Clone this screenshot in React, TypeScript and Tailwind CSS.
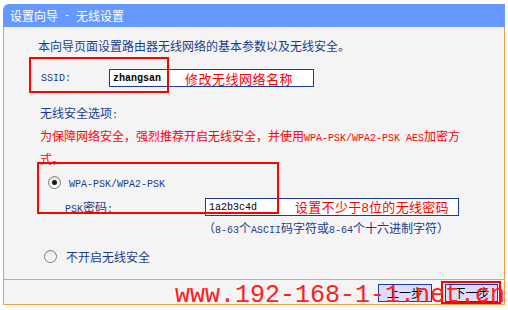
import React from "react";

const cjk = "font-['Noto_Sans_CJK_SC',sans-serif]";
const mono = "font-['Liberation_Mono',monospace] text-[10px]";

function Radio({ checked }: { checked?: boolean }) {
  return (
    <div className="w-[13px] h-[13px] rounded-full border border-[#7a7a7a] bg-gradient-to-b from-[#e6e6e6] to-white flex items-center justify-center shrink-0">
      {checked && <div className="w-[5px] h-[5px] rounded-full bg-[#1a1a1a]" />}
    </div>
  );
}

export default function App() {
  return (
    <div className={`w-[508px] h-[310px] bg-white pt-[4px] pl-[3px] ${cjk} text-[12px]`}>
      <div className="w-[502px]">
        <div className="h-[23px] bg-[#6699ff] rounded-tl-[6px] flex items-center pl-[7px] text-white text-[12px] leading-none">
          <span>设置向导</span>
          <span className="font-['Liberation_Mono',monospace] text-[10px] whitespace-pre"> - </span>
          <span>无线设置</span>
        </div>
        <div className="relative border-x border-b border-[#f7a040] bg-[#f4f4f4] text-[#1b3c8e]">
          <div className="h-[252px] pt-[11px] pl-[34px]">
            <div className="leading-[16px]">本向导页面设置路由器无线网络的基本参数以及无线安全。</div>
            <div className="mt-[15px] flex items-center h-[18px]">
              <span className={`${mono} w-[71px] shrink-0 pl-[3px] text-[#1b3c8e]`}>SSID:</span>
              <div className="w-[205px] h-[18px] border border-[#1a3ca0] bg-white flex items-center">
                <span className="font-['Liberation_Mono',monospace] text-[10px] font-bold text-black w-[75px] pl-[3px]">zhangsan</span>
                <span className="text-[#ff0000] text-[13px] leading-none tracking-[0.5px]">修改无线网络名称</span>
              </div>
            </div>
            <div className="mt-[16px] leading-[20px] pl-[2px]">
              <div>
                无线安全选项<span className={mono}>:</span>
              </div>
              <div className="text-[#ff0000]">
                为保障网络安全，强烈推荐开启无线安全，并使用
                <span className={mono}>WPA-PSK/WPA2-PSK AES</span>加密方
                <br />
                式。
              </div>
            </div>
            <div className="mt-[6px] flex items-center h-[14px] pl-[10px]">
              <Radio checked />
              <span className={`${mono} ml-[8px] mt-[4px]`}>WPA-PSK/WPA2-PSK</span>
            </div>
            <div className="mt-[9px] flex items-center h-[18px]">
              <span className="w-[167px] shrink-0 pl-[27px]">
                <span className={mono}>PSK</span>密码<span className={mono}>:</span>
              </span>
              <div className="w-[254px] h-[18px] border border-[#1a3ca0] bg-white flex items-center">
                <span className="font-['Liberation_Mono',monospace] text-[10px] text-black w-[89px] pl-[3px]">1a2b3c4d</span>
                <span className="text-[#ff0000] text-[13px] leading-none tracking-[0.3px]">
                  设置不少于<span className="font-['Liberation_Sans',sans-serif]">8</span>位的无线密码
                </span>
              </div>
            </div>
            <div className="mt-[4px] leading-[16px] pl-[165px]">
              （<span className={mono}>8-63</span>个<span className={mono}>ASCII</span>码字符或<span className={mono}>8-64</span>个十六进制字符）
            </div>
            <div className="mt-[10px] flex items-center h-[14px] pl-[6px]">
              <Radio />
              <span className="ml-[9px] mt-[2px]">不开启无线安全</span>
            </div>
          </div>
          <div className="h-[25px] border-t border-[#f7a040] flex items-start justify-end pr-[6px] pt-[4px] gap-[13px]">
            <div className="w-[54px] h-[18px] border border-[#1a3ca0] bg-[#dcdcfa] text-black flex items-center justify-center leading-none">上一步</div>
            <div className="w-[53px] h-[18px] border border-[#1a3ca0] bg-[#dcdcfa] text-black flex items-center justify-center leading-none">下一步</div>
          </div>

          <div className="absolute left-[25px] top-[30px] w-[140px] h-[36px] border-2 border-[#ff0000]" />
          <div className="absolute left-[33px] top-[135px] w-[242px] h-[52px] border-2 border-[#ff0000]" />
          <div className="absolute left-[437px] top-[254px] w-[60px] h-[23px] border-2 border-[#ff0000]" />
          <div className="absolute left-[171px] top-[256px] font-['Liberation_Mono',monospace] text-[25px] leading-none text-[#ff2020] whitespace-nowrap">
            www.192-168-1-1.net.cn
          </div>
        </div>
      </div>
    </div>
  );
}
